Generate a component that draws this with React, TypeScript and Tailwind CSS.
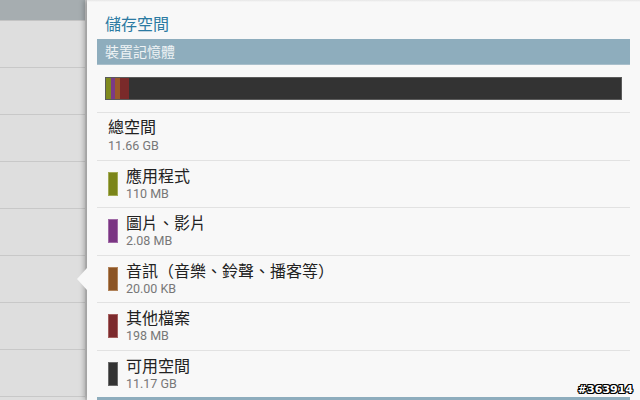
import React from "react";

const font = { fontFamily: 'Roboto, "Noto Sans CJK TC", "Noto Sans", sans-serif' };

type Item = { name: string; size: string; color: string; border: string };

const items: Item[] = [
  { name: "應用程式", size: "110 MB", color: "bg-[#7b8519]", border: "border-[#a3ab55]" },
  { name: "圖片、影片", size: "2.08 MB", color: "bg-[#7a3583]", border: "border-[#a06aa6]" },
  { name: "音訊（音樂、鈴聲、播客等）", size: "20.00 KB", color: "bg-[#8c5424]", border: "border-[#b1835a]" },
  { name: "其他檔案", size: "198 MB", color: "bg-[#7c2a2d]", border: "border-[#a4605f]" },
  { name: "可用空間", size: "11.17 GB", color: "bg-[#333333]", border: "border-[#6a6a6a]" },
];

export default function App() {
  return (
    <div className="relative flex h-[400px] w-[640px] overflow-hidden bg-[#f8f8f8]" style={font}>
      {/* left list */}
      <div className="flex w-[87px] shrink-0 flex-col bg-[#dedede] border-r-2 border-[#cfcfcf]">
        <div className="h-[21px] shrink-0 bg-[#a6adb0] border-b border-[#c4c4c4]" />
        {Array.from({ length: 8 }).map((_, i) => (
          <div key={i} className="h-[47px] shrink-0 border-b border-[#c8c8c8]" />
        ))}
      </div>

      {/* right panel */}
      <div className="relative flex-1 bg-[#f8f8f8] shadow-[-3px_0_5px_rgba(0,0,0,0.25)]">
        <div className="absolute left-[-10px] top-[268px] h-0 w-0 border-y-[11px] border-r-[10px] border-y-transparent border-r-[#f8f8f8]" />
        <div className="h-[2px] bg-gradient-to-b from-[#e6e6e6] to-[#f8f8f8]" />
        <div className="flex flex-col pl-[10px] pr-[10px]">
          <div className="h-[37px] pl-[8px] pt-[13px] text-[16px] leading-[20px] text-[#2b7aa2]">儲存空間</div>
          <div className="h-[26px] bg-[#8eadbd] pl-[8px] text-[14px] leading-[26px] text-[#eef3f5] border-b border-[#a9bfcb]">裝置記憶體</div>
          <div className="mx-[8px] mt-[12px] flex h-[23px] overflow-hidden border border-[#5a5a5a] bg-[#333333]">
            <div className="w-[5px] bg-[#7f8a1e]" />
            <div className="w-[4px] bg-[#7b3a87]" />
            <div className="w-[5px] bg-[#9b5a2a]" />
            <div className="w-[9px] bg-[#7a2a2a]" />
          </div>
          <div className="mt-[12px] h-[47.5px] border-t border-[#e2e2e2] pl-[11px] pt-[5px]">
            <div className="text-[16px] leading-[20px] text-[#222222]">總空間</div>
            <div className="text-[12.5px] leading-[16px] text-[#777777]">11.66 GB</div>
          </div>
          {items.map((it) => (
            <div key={it.name} className="flex h-[47.5px] border-t border-[#e2e2e2] pl-[11px]">
              <div className={`mt-[11px] h-[24px] w-[10px] shrink-0 border ${it.color} ${it.border}`} />
              <div className="pl-[8px] pt-[6px]">
                <div className="text-[16px] leading-[20px] text-[#222222]">{it.name}</div>
                <div className="text-[12.5px] leading-[14px] text-[#777777]">{it.size}</div>
              </div>
            </div>
          ))}
          <div className="h-[26px] bg-[#8eadbd]" />
        </div>
      </div>

      <div className="absolute bottom-[4px] right-[7px] text-[11px] font-bold leading-[13px] text-white [text-shadow:_-1px_0_#000,_1px_0_#000,_0_-1px_#000,_0_1px_#000,_-1px_-1px_#000,_1px_1px_#000,_-1px_1px_#000,_1px_-1px_#000]" style={{ fontFamily: '"DejaVu Sans", sans-serif' }}>
        #363914
      </div>
    </div>
  );
}
